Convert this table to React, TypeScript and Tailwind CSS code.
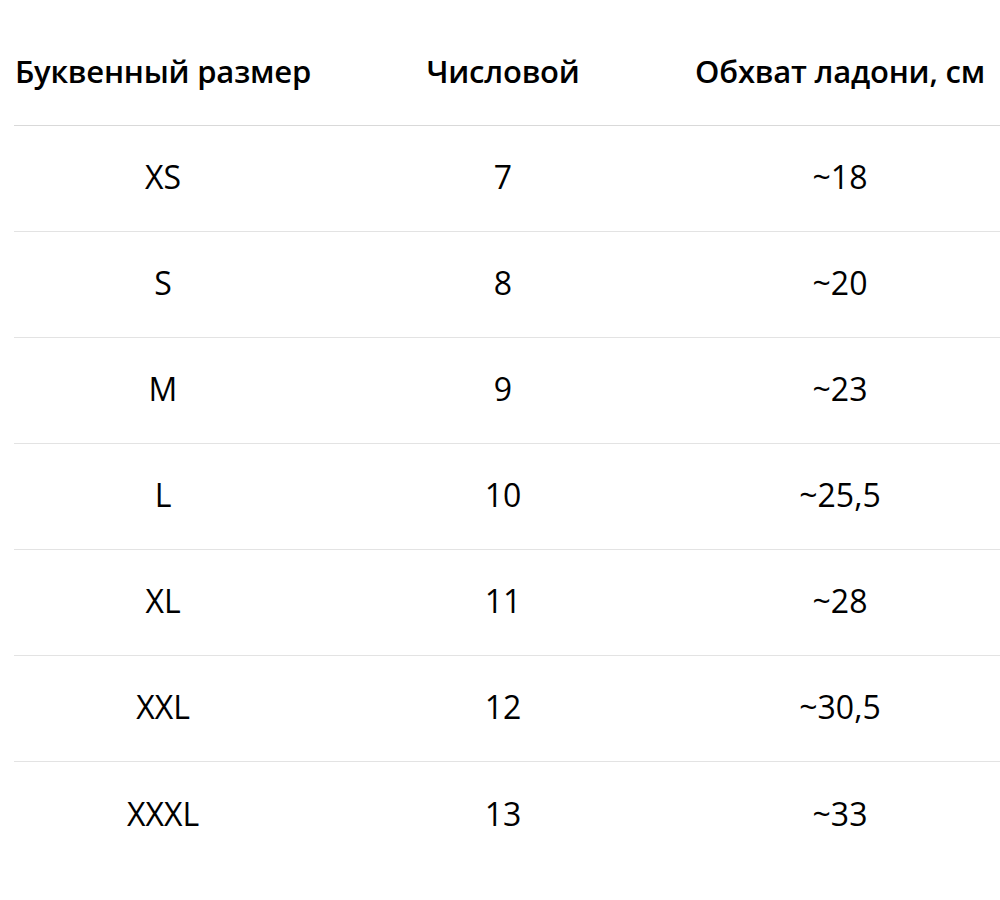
const rows = [
  ['XS', '7', '~18'],
  ['S', '8', '~20'],
  ['M', '9', '~23'],
  ['L', '10', '~25,5'],
  ['XL', '11', '~28'],
  ['XXL', '12', '~30,5'],
  ['XXXL', '13', '~33'],
]

export default function App() {
  return (
    <div className="min-h-[900px] bg-white pt-5 pl-[14px] text-black font-['Open_Sans',sans-serif]">
      <div className="grid h-[106px] grid-cols-[298px_382px_292px] items-center border-b border-[#d9d9d9] pb-[2px] text-[31px] font-semibold tracking-[-0.2px]">
        <div className="text-center">Буквенный размер</div>
        <div className="text-center">Числовой</div>
        <div className="text-center">Обхват ладони, см</div>
      </div>
      {rows.map((r, i) => (
        <div
          key={r[0]}
          className={
            i < rows.length - 1
              ? 'grid h-[106px] grid-cols-[298px_382px_292px] items-center border-b border-[#e3e3e3] pb-[3px] text-[32px]'
              : 'grid h-[106px] grid-cols-[298px_382px_292px] items-center pb-[3px] text-[32px]'
          }
        >
          <div className="text-center">{r[0]}</div>
          <div className="text-center">{r[1]}</div>
          <div className="text-center">{r[2]}</div>
        </div>
      ))}
    </div>
  )
}
